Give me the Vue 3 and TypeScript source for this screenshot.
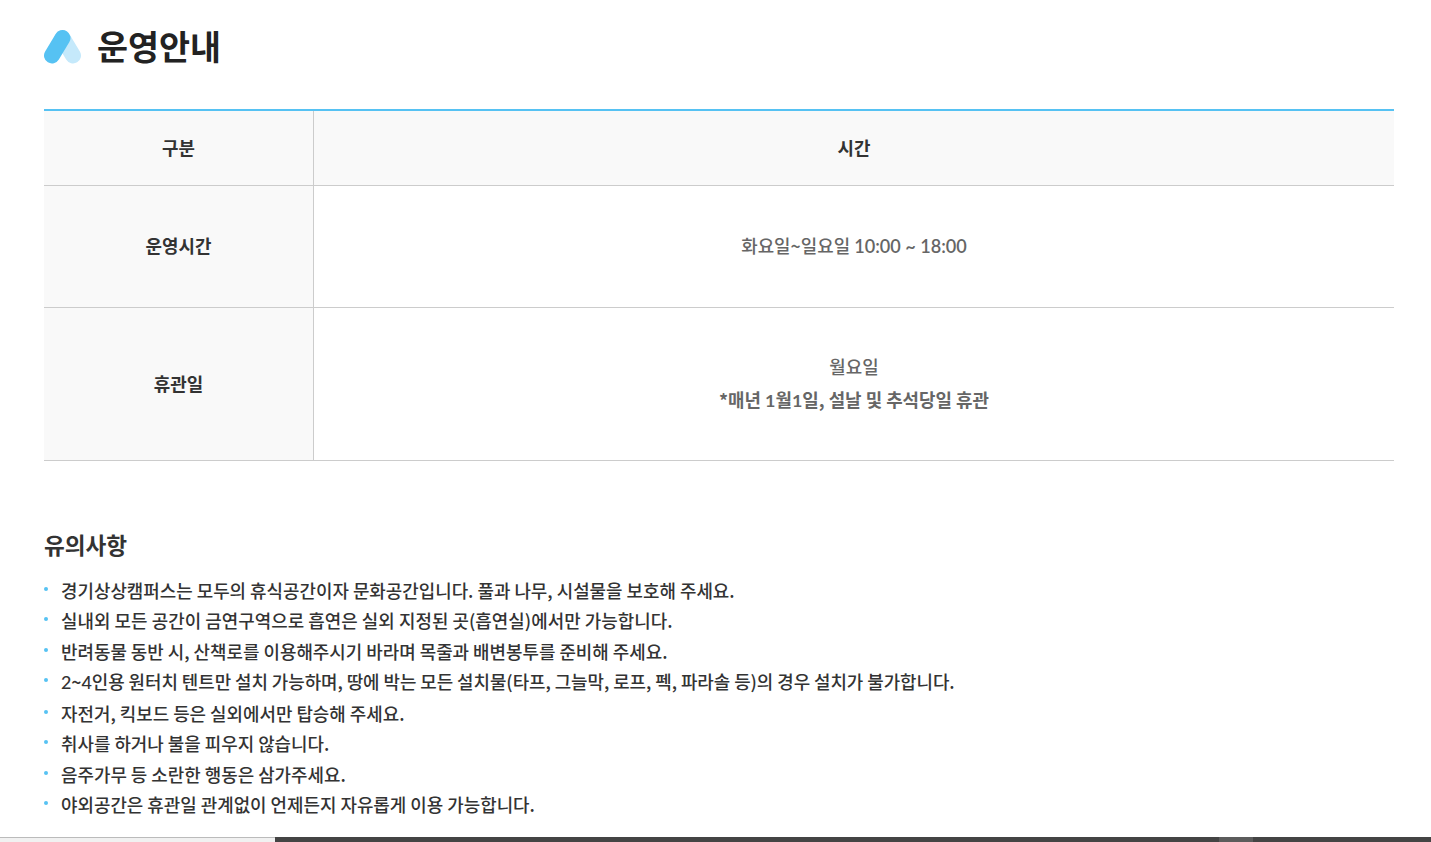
<script setup lang="ts">
const rows: string[][] = [
  ['경기상상캠퍼스는 모두의 휴식공간이자 문화공간입니다. 풀과 나무, 시설물을 보호해 주세요.'],
  ['실내외 모든 공간이 금연구역으로 흡연은 실외 지정된 곳(흡연실)에서만 가능합니다.'],
  ['반려동물 동반 시, 산책로를 이용해주시기 바라며 목줄과 배변봉투를 준비해 주세요.'],
  ['', '2', '~', '4', '인용 원터치 텐트만 설치 가능하며, 땅에 박는 모든 설치물(타프, 그늘막, 로프, 펙, 파라솔 등)의 경우 설치가 불가합니다.'],
  ['자전거, 킥보드 등은 실외에서만 탑승해 주세요.'],
  ['취사를 하거나 불을 피우지 않습니다.'],
  ['음주가무 등 소란한 행동은 삼가주세요.'],
  ['야외공간은 휴관일 관계없이 언제든지 자유롭게 이용 가능합니다.'],
]
</script>

<template>
  <div class="page">
    <main class="content">
      <h1 class="title">
        <svg class="logo" width="38" height="35" viewBox="0 0 38 35" aria-hidden="true">
          <line x1="18.5" y1="9" x2="29" y2="26.5" stroke="#c5e9fb" stroke-width="16" stroke-linecap="round" />
          <line x1="18.5" y1="9" x2="8" y2="26.5" stroke="#56c2f3" stroke-width="16" stroke-linecap="round" />
        </svg>
        <span>운영안내</span>
      </h1>

      <div class="table">
        <div class="cell head key">구분</div>
        <div class="cell head val strong">시간</div>
        <div class="cell key tall1">운영시간</div>
        <div class="cell val tall1"><div>화요일~일요일 <span class="num time">10:00 ~ 18:00</span></div></div>
        <div class="cell key tall2">휴관일</div>
        <div class="cell val tall2 stack">
          <p>월요일</p>
          <p class="bold">*매년 <span class="num">1</span>월<span class="num">1</span>일, 설날 및 추석당일 휴관</p>
        </div>
      </div>

      <h2 class="sub">유의사항</h2>
      <ul class="notes">
        <li v-for="r in rows" :key="r.join('')">
          <template v-for="(part, i) in r" :key="i">
            <span v-if="i % 2 === 1" class="num">{{ part }}</span>
            <template v-else>{{ part }}</template>
          </template>
        </li>
      </ul>
    </main>
    <div class="scroll">
      <div class="left"></div>
      <div class="right"><div class="thumb"></div></div>
    </div>
  </div>
</template>

<style>
html, body { margin: 0; background: #fff; overflow: hidden; }
</style>

<style scoped>
.page {
  width: 1431px;
  height: 842px;
  display: flex;
  flex-direction: column;
  overflow: hidden;
  font-family: "Noto Sans CJK KR", sans-serif;
  font-size: 17.9px;
  color: #333;
}
.num { font-family: Lato, sans-serif; }
.time { font-weight: 600; font-size: 18.1px; }
.content { flex: 1; padding: 0 37px 0 44px; min-height: 0; }
.title {
  margin: 0;
  height: 109px;
  display: flex;
  align-items: flex-start;
  gap: 15px;
  padding-top: 25px;
  box-sizing: border-box;
  font-size: 33.7px;
  line-height: 42px;
  font-weight: 700;
  color: #222;
}
.logo { flex: none; margin-top: 4px; }
.table {
  display: grid;
  grid-template-columns: 270px 1fr;
  border-top: 2px solid #56c2f3;
}
.cell {
  display: flex;
  flex-direction: column;
  align-items: center;
  justify-content: center;
  border-bottom: 1px solid #ccc;
  box-sizing: border-box;
  line-height: 30.6px;
  padding-bottom: 2px;
}
.key { background: #f9f9f9; border-right: 1px solid #ccc; font-weight: 700; color: #333; }
.val { color: #666; font-weight: 500; }
.head { height: 75px; background: #f9f9f9; }
.strong { font-weight: 700; color: #333; }
.tall1 { height: 122px; }
.tall2 { height: 153px; }
.stack p { margin: 0; line-height: 33px; }
.bold { font-weight: 700; }
.sub {
  margin: 67px 0 0;
  font-size: 22.6px;
  line-height: 34px;
  font-weight: 700;
  color: #333;
}
.notes { list-style: none; margin: 12.6px 0 0; padding: 0; }
.notes li {
  position: relative;
  padding-left: 17px;
  line-height: 30.5px;
  font-weight: 500;
  color: #333;
}
.notes li:nth-child(2) { letter-spacing: 0.04px; }
.notes li:nth-child(4) { letter-spacing: -0.05px; }
.notes li::before {
  content: "";
  position: absolute;
  left: 0;
  top: 12px;
  width: 4px;
  height: 4px;
  border-radius: 50%;
  background: #56c2f3;
}
.scroll { height: 5px; display: flex; flex: none; }
.left { width: 275px; background: #f1f1f1; border-top: 1px solid #bbb; box-sizing: border-box; }
.right { flex: 1; background: #444; padding-left: 944px; }
.thumb { width: 34px; height: 100%; background: #5c5c5c; }
</style>
